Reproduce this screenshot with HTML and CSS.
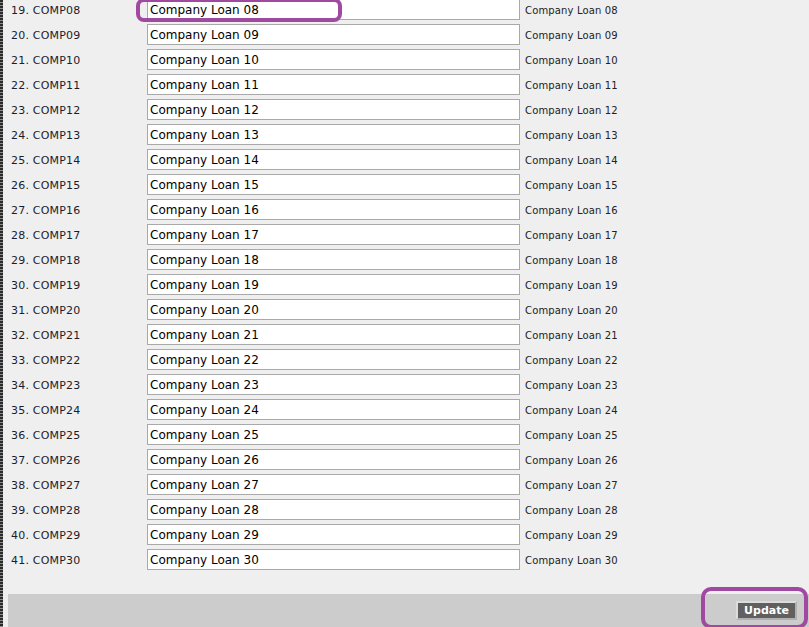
FILE: index.html
```html
<!DOCTYPE html>
<html>
<head>
<meta charset="utf-8">
<link rel="stylesheet" href="styles.css">
</head>
<body>
<div class="page">
  <div class="edge"></div>
  <div class="main">
    <div class="rows" id="rows">
      <div class="row"><span class="lbl">19. COMP08</span><input class="fld" value="Company Loan 08"><span class="desc">Company Loan 08</span></div>
      <div class="row"><span class="lbl">20. COMP09</span><input class="fld" value="Company Loan 09"><span class="desc">Company Loan 09</span></div>
      <div class="row"><span class="lbl">21. COMP10</span><input class="fld" value="Company Loan 10"><span class="desc">Company Loan 10</span></div>
      <div class="row"><span class="lbl">22. COMP11</span><input class="fld" value="Company Loan 11"><span class="desc">Company Loan 11</span></div>
      <div class="row"><span class="lbl">23. COMP12</span><input class="fld" value="Company Loan 12"><span class="desc">Company Loan 12</span></div>
      <div class="row"><span class="lbl">24. COMP13</span><input class="fld" value="Company Loan 13"><span class="desc">Company Loan 13</span></div>
      <div class="row"><span class="lbl">25. COMP14</span><input class="fld" value="Company Loan 14"><span class="desc">Company Loan 14</span></div>
      <div class="row"><span class="lbl">26. COMP15</span><input class="fld" value="Company Loan 15"><span class="desc">Company Loan 15</span></div>
      <div class="row"><span class="lbl">27. COMP16</span><input class="fld" value="Company Loan 16"><span class="desc">Company Loan 16</span></div>
      <div class="row"><span class="lbl">28. COMP17</span><input class="fld" value="Company Loan 17"><span class="desc">Company Loan 17</span></div>
      <div class="row"><span class="lbl">29. COMP18</span><input class="fld" value="Company Loan 18"><span class="desc">Company Loan 18</span></div>
      <div class="row"><span class="lbl">30. COMP19</span><input class="fld" value="Company Loan 19"><span class="desc">Company Loan 19</span></div>
      <div class="row"><span class="lbl">31. COMP20</span><input class="fld" value="Company Loan 20"><span class="desc">Company Loan 20</span></div>
      <div class="row"><span class="lbl">32. COMP21</span><input class="fld" value="Company Loan 21"><span class="desc">Company Loan 21</span></div>
      <div class="row"><span class="lbl">33. COMP22</span><input class="fld" value="Company Loan 22"><span class="desc">Company Loan 22</span></div>
      <div class="row"><span class="lbl">34. COMP23</span><input class="fld" value="Company Loan 23"><span class="desc">Company Loan 23</span></div>
      <div class="row"><span class="lbl">35. COMP24</span><input class="fld" value="Company Loan 24"><span class="desc">Company Loan 24</span></div>
      <div class="row"><span class="lbl">36. COMP25</span><input class="fld" value="Company Loan 25"><span class="desc">Company Loan 25</span></div>
      <div class="row"><span class="lbl">37. COMP26</span><input class="fld" value="Company Loan 26"><span class="desc">Company Loan 26</span></div>
      <div class="row"><span class="lbl">38. COMP27</span><input class="fld" value="Company Loan 27"><span class="desc">Company Loan 27</span></div>
      <div class="row"><span class="lbl">39. COMP28</span><input class="fld" value="Company Loan 28"><span class="desc">Company Loan 28</span></div>
      <div class="row"><span class="lbl">40. COMP29</span><input class="fld" value="Company Loan 29"><span class="desc">Company Loan 29</span></div>
      <div class="row"><span class="lbl">41. COMP30</span><input class="fld" value="Company Loan 30"><span class="desc">Company Loan 30</span></div>
    </div>
    <div class="bar">
      <button class="update">Update</button>
    </div>
  </div>
</div>
<div class="mark mark-top"></div>
<div class="mark mark-btn"></div>
</body>
</html>
```

FILE: styles.css
```css
html, body {
  margin: 0;
  padding: 0;
  background: #efefef;
  overflow: hidden;
  height: 627px;
}
body {
  font-family: "DejaVu Sans", Verdana, sans-serif;
  color: #1c1c28;
}
.page {
  display: flex;
  height: 627px;
}
.edge {
  width: 3px;
  flex: none;
  background: repeating-linear-gradient(to bottom, #2a2a2a 0, #2a2a2a 2px, #8a8a8a 2px, #8a8a8a 3px);
}
.main {
  flex: 1;
  margin-left: 5px;
  display: flex;
  flex-direction: column;
}
.rows {
  margin-top: -3px;
  padding-left: 3px;
}
.row {
  display: flex;
  align-items: center;
  height: 25px;
}
.lbl {
  width: 136px;
  flex: none;
  padding-top: 2px;
  font-size: 11px;
  letter-spacing: 0.2px;
  color: #1c1c2c;
}
.fld {
  box-sizing: border-box;
  width: 373px;
  height: 21px;
  margin: 0;
  padding: 0 2px;
  border: 1px solid #a9a9a9;
  background: #fff;
  font-family: "DejaVu Sans", Verdana, sans-serif;
  font-size: 12px;
  color: #000;
  outline: none;
}
.desc {
  margin-left: 5px;
  padding-top: 2px;
  font-size: 10px;
  letter-spacing: 0.15px;
  color: #222;
}
.bar {
  margin-top: 22px;
  background: #cccccc;
  height: 40px;
  display: flex;
  justify-content: flex-end;
  align-items: flex-start;
  padding: 7px 12px 0 0;
}
.update {
  box-sizing: border-box;
  width: 61px;
  height: 19px;
  margin: 0;
  padding: 0;
  background: #606060;
  border: 2px solid #dcdcdc;
  border-right-color: #b0b0b0;
  border-bottom-color: #b0b0b0;
  color: #fff;
  font-family: "DejaVu Sans", Verdana, sans-serif;
  font-weight: bold;
  font-size: 11px;
  line-height: 14px;
}
.mark {
  position: absolute;
  border: 4px solid #9f49a1;
  box-sizing: border-box;
}
.mark-top {
  left: 136px;
  top: -2px;
  width: 206px;
  height: 24px;
  border-radius: 8px;
}
.mark-btn {
  left: 701px;
  top: 587px;
  width: 107px;
  height: 42px;
  border-radius: 10px;
}
```
